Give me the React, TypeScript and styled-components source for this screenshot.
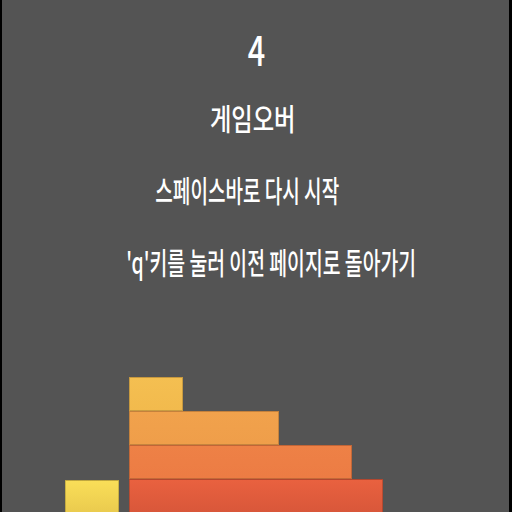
import React from "react";
import styled, { createGlobalStyle } from "styled-components";

const Global = createGlobalStyle`
  html, body { margin: 0; padding: 0; background: #000; }
  #root { width: 512px; height: 512px; }
`;

const Frame = styled.div`
  width: 512px;
  height: 512px;
  box-sizing: border-box;
  padding: 0 3px 0 2px;
  background: #000;
  display: flex;
`;

const Screen = styled.div`
  flex: 1;
  background: #545454;
  display: flex;
  flex-direction: column;
  overflow: hidden;
  font-family: "Noto Sans CJK KR", "Noto Sans", sans-serif;
  color: #fff;
`;

const Messages = styled.div`
  display: flex;
  flex-direction: column;
  align-items: center;
`;

const Line = styled.div<{ $size: number; $top: number; $shift: number; $scale: number }>`
  font-size: ${(p) => p.$size}px;
  font-weight: 500;
  line-height: 1;
  margin-top: ${(p) => p.$top}px;
  white-space: nowrap;
  transform: translateX(${(p) => p.$shift}px) scaleX(${(p) => p.$scale});
  transform-origin: center;
`;

const Stack = styled.div`
  margin-top: auto;
  margin-bottom: -1px;
  display: flex;
  flex-direction: column;
`;

const Row = styled.div<{ $indent: number }>`
  display: flex;
  align-items: flex-end;
  gap: 10px;
  padding-left: ${(p) => p.$indent}px;
  height: 34px;
`;

const Block = styled.div<{ $w: number; $c1: string; $c2: string; $h?: number }>`
  box-sizing: border-box;
  width: ${(p) => p.$w}px;
  height: ${(p) => p.$h ?? 34}px;
  background: linear-gradient(${(p) => p.$c1}, ${(p) => p.$c2});
  border: 1px solid rgba(0, 0, 0, 0.18);
`;

export default function App() {
  return (
    <>
      <Global />
      <Frame>
        <Screen>
          <Messages>
            <Line $size={42} $top={27} $shift={0.5} $scale={0.73}>4</Line>
            <Line $size={30} $top={33} $shift={-2.5} $scale={0.775}>게임오버</Line>
            <Line $size={30} $top={42} $shift={-8.5} $scale={0.635}>스페이스바로 다시 시작</Line>
            <Line $size={30} $top={42} $shift={15.5} $scale={0.645}>'q'키를 눌러 이전 페이지로 돌아가기</Line>
          </Messages>
          <Stack>
            <Row $indent={127}>
              <Block $w={54} $c1="#F4BF51" $c2="#F2BA4D" />
            </Row>
            <Row $indent={127}>
              <Block $w={150} $c1="#F1A24C" $c2="#EF9E4A" />
            </Row>
            <Row $indent={127}>
              <Block $w={223} $c1="#EE8146" $c2="#EC7C44" />
            </Row>
            <Row $indent={63}>
              <Block $w={54} $h={33} $c1="#FADE58" $c2="#EACB4E" />
              <Block $w={254} $c1="#E9613F" $c2="#D9573A" />
            </Row>
          </Stack>
        </Screen>
      </Frame>
    </>
  );
}
